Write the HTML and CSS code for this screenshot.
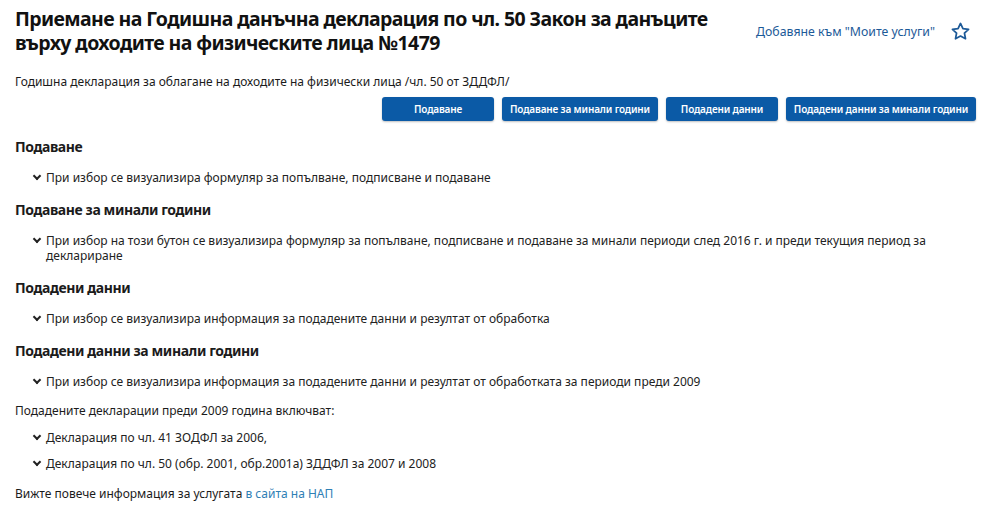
FILE: index.html
```html
<!DOCTYPE html>
<html lang="bg">
<head>
<meta charset="utf-8">
<link rel="stylesheet" href="styles.css">
</head>
<body>
<div class="page">
  <div class="head">
    <h1 class="title">Приемане на Годишна данъчна декларация по чл. 50 Закон за данъците върху доходите на физическите лица №1479</h1>
    <div class="fav">
      <a class="fav-link" href="#">Добавяне към "Моите услуги"</a>
      <svg class="star" viewBox="0 0 24 24" width="21" height="21"><path d="M12 2.8l2.8 5.9 6.4.8-4.7 4.4 1.2 6.4L12 17.2l-5.7 3.1 1.2-6.4-4.7-4.4 6.4-.8z" fill="none" stroke="#1d5a98" stroke-width="2" stroke-linejoin="round"/></svg>
    </div>
  </div>
  <p class="subtitle">Годишна декларация за облагане на доходите на физически лица /чл. 50 от ЗДДФЛ/</p>
  <div class="actions">
    <button class="btn btn-sm">Подаване</button>
    <button class="btn btn-md">Подаване за минали години</button>
    <button class="btn btn-sm">Подадени данни</button>
    <button class="btn btn-lg">Подадени данни за минали години</button>
  </div>

  <h2 class="sec">Подаване</h2>
  <ul class="list">
    <li>При избор се визуализира формуляр за попълване, подписване и подаване</li>
  </ul>
  <h2 class="sec">Подаване за минали години</h2>
  <ul class="list">
    <li>При избор на този бутон се визуализира формуляр за попълване, подписване и подаване за минали периоди след 2016 г. и преди текущия период за деклариране</li>
  </ul>
  <h2 class="sec">Подадени данни</h2>
  <ul class="list">
    <li>При избор се визуализира информация за подадените данни и резултат от обработка</li>
  </ul>
  <h2 class="sec">Подадени данни за минали години</h2>
  <ul class="list">
    <li>При избор се визуализира информация за подадените данни и резултат от обработката за периоди преди 2009</li>
  </ul>
  <p class="text">Подадените декларации преди 2009 година включват:</p>
  <ul class="list list-b">
    <li>Декларация по чл. 41 ЗОДФЛ за 2006,</li>
    <li>Декларация по чл. 50 (обр. 2001, обр.2001а) ЗДДФЛ за 2007 и 2008</li>
  </ul>
  <p class="text text-last">Вижте повече информация за услугата <a class="link" href="#">в сайта на НАП</a></p>
</div>
</body>
</html>
```
FILE: styles.css
```css
* { box-sizing: border-box; }
html, body { margin: 0; padding: 0; background: #fff; }
body {
  font-family: "Noto Sans", "Open Sans", sans-serif;
  color: #1b1b1b;
  font-size: 12px;
}
.page { padding: 7px 15px 0 15px; }
.head { display: flex; align-items: center; justify-content: space-between; }
.title {
  margin: 0;
  font-size: 19.5px;
  line-height: 24px;
  font-weight: 700;
  letter-spacing: -0.6px;
  width: 720px;
  color: #111;
}
.fav { display: flex; align-items: center; gap: 15px; padding-right: 5px; }
.fav-link { color: #1d5a98; text-decoration: none; font-size: 12.3px; }
.star { display: block; }
.subtitle { margin: 19px 0 0; font-size: 12px; line-height: 16px; }
.actions { display: flex; justify-content: flex-end; gap: 8px; margin-top: 7px; }
.btn {
  font-family: inherit;
  background: #0b5aa6;
  color: #fff;
  border: none;
  border-radius: 3px;
  height: 24px;
  font-size: 10px;
  font-weight: 600;
  letter-spacing: -0.15px;
  padding: 0;
  white-space: nowrap;
  box-shadow: 0 1px 2px rgba(0,0,0,.25);
}
.btn-sm { width: 112px; }
.btn-md { width: 156px; }
.btn-lg { width: 190px; }
.sec { margin: 16px 0 0; font-size: 14px; line-height: 18px; font-weight: 700; letter-spacing: -0.4px; }
.actions + .sec { margin-top: 17px; }
.list { list-style: none; margin: 14px 0 0; padding: 0 0 0 16px; }
.list li { position: relative; padding-left: 15px; line-height: 15px; font-size: 12px; color: #222; }
.list li::before {
  content: "";
  position: absolute;
  left: 3px; top: 3px;
  width: 4px; height: 4px;
  border-right: 2px solid #222;
  border-bottom: 2px solid #222;
  transform: rotate(45deg);
}
.list-b { margin-top: 11px; }
.list-b li + li { margin-top: 11px; }
.text { margin: 14px 0 0; font-size: 12px; line-height: 16px; }
.text-last { margin-top: 15px; }
.link { color: #2f80b5; text-decoration: none; }
```
